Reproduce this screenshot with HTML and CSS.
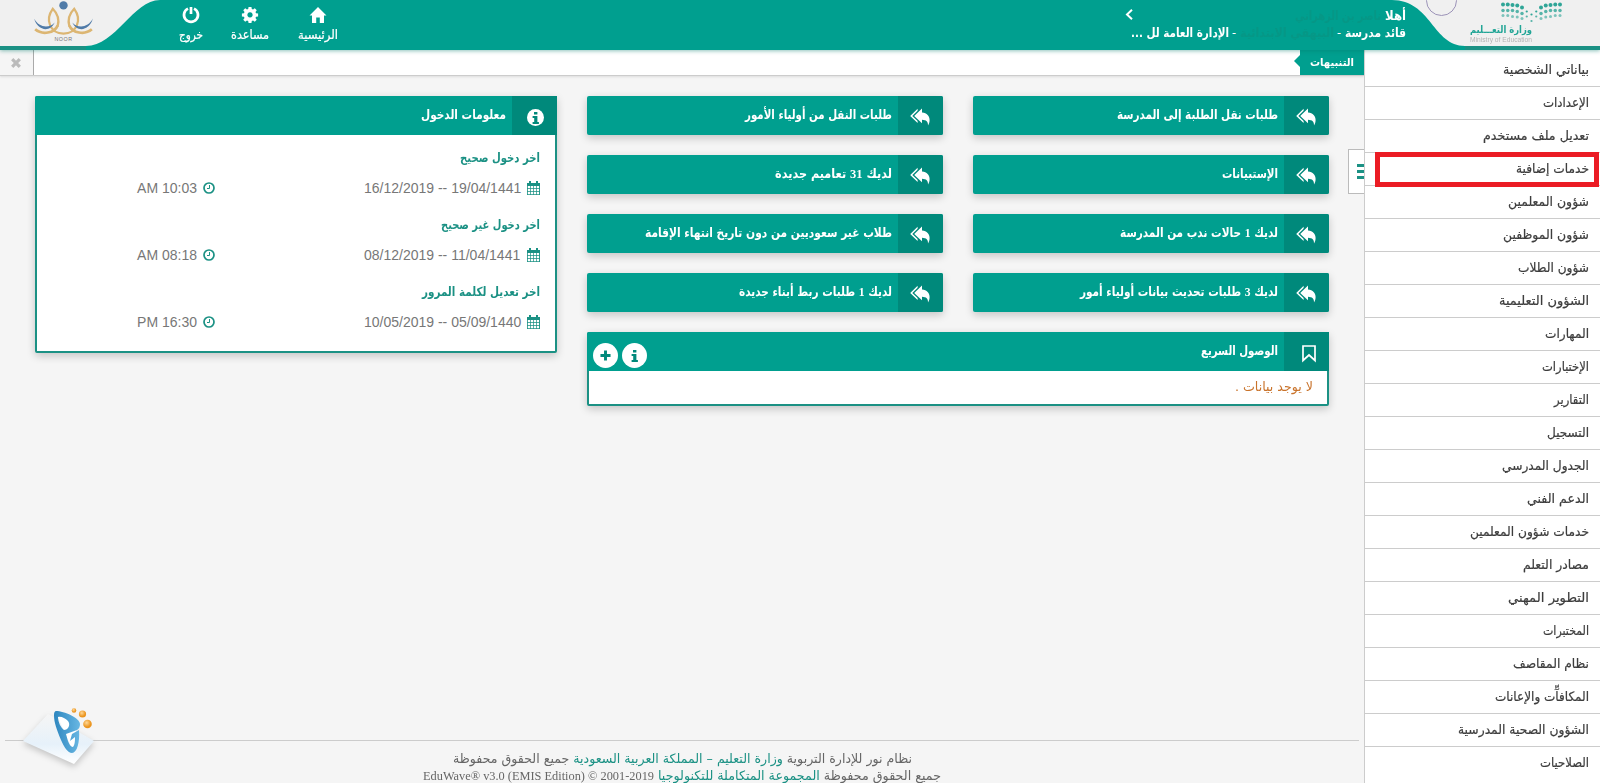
FILE: index.html
```html
<!DOCTYPE html>
<html lang="ar" dir="rtl">
<head>
<meta charset="utf-8">
<title>نظام نور</title>
<link rel="stylesheet" href="styles.css">
</head>
<body>
<svg width="0" height="0" class="defs">
  <symbol id="reply" viewBox="0 0 20 18"><path d="M12 0.500v4c5 .4 7.600 3.500 7.600 7.500 0 2-.6 4-1.600 5.500.2-4-1.600-5.500-6-5.700v3.500L4.200 8z"/><path d="M7.600 .8v2L2.300 8l5.300 5v2L.2 8z"/></symbol>
  <symbol id="cal" viewBox="0 0 13 14"><path fill-rule="evenodd" d="M0 2h2V0h2v2h5V0h2v2h2v12H0zM.8 5v2.200h2.300V5zm3 0v2.200h2.300V5zm3 0v2.200h2.300V5zm3 0v2.200h2.300V5zM.8 8v2.200h2.300V8zm3 0v2.200h2.300V8zm3 0v2.200h2.300V8zm3 0v2.200h2.300V8zM.8 11v2.200h2.300V11zm3 0v2.200h2.300V11zm3 0v2.200h2.300V11zm3 0v2.200h2.300V11z"/></symbol>
  <symbol id="clock" viewBox="0 0 12 12"><circle cx="6" cy="6" r="5" fill="none" stroke="currentColor" stroke-width="1.700"/><path d="M6.500 3v3.500H4" fill="none" stroke="currentColor"/></symbol>
  <symbol id="info" viewBox="0 0 8 12"><path d="M2 0h3.400v2.600H2zM.6 4h4.800v6h1.500v2H.6v-2h1.600V6H.6z"/></symbol>
</svg>
<header class="top">
  <svg class="swoosh" viewBox="0 0 1600 50">
    <path fill="#1b9184" d="M0 46H1600V50H0z"/>
    <path fill="#009f8f" d="M160 0C133 0 116 46 86 46V50H1465V46C1433 46 1431 0 1392 0z"/>
    <circle cx="1441.500" cy="0.500" r="15" fill="none" stroke="#9c93b8"/>
  </svg>
  <div class="ministry">
    <svg class="dots" viewBox="0 0 61 22" id="dots"></svg>
    <div class="min-ar"><span data-w="62">وزارة التعـــليم</span></div>
    <div class="min-en"><span data-w="62">Ministry of Education</span></div>
  </div>
  <div class="user">
    <div class="line"><span data-w="21">أهلا</span> <span class="ghost" data-w="86">ناصر بن الزهراني</span></div>
    <div class="line"><span data-w="61">قائد مدرسة</span> <span class="dash">-</span><span class="ghost" data-w="94">البيهقي الابتدائية</span> <span class="dash">-</span> <span data-w="98">الإدارة العامة لل ...</span></div>
  </div>
  <svg class="chev" viewBox="0 0 8 11"><path d="M7 .8 2 5.500 7 10.200" fill="none" stroke="#fff" stroke-width="2"/></svg>
  <nav class="tools">
    <a><svg viewBox="0 0 18 17"><path d="M9 .5 17.500 9H15v7.500h-4.200V11H7.200v5.500H3V9H.5z"/></svg><span data-w="40">الرئيسية</span></a>
    <a><svg viewBox="0 0 18 20"><path fill-rule="evenodd" d="M7.400 1h3.200l.4 2.300 1.400.6 1.900-1.400 2.200 2.200-1.400 1.900.6 1.400 2.300.4v3.200l-2.300.4-.6 1.400 1.400 1.900-2.200 2.200-1.900-1.400-1.400.6-.4 2.300H7.400L7 16.700l-1.400-.6-1.900 1.400-2.200-2.200 1.400-1.900-.6-1.400L0 11.600V8.400L2.300 8l.6-1.400-1.400-1.900 2.200-2.200 1.900 1.400L7 3.300zM9 7a2.900 2.900 0 1 0 .01 0z"/></svg><span data-w="38">مساعدة</span></a>
    <a><svg viewBox="0 0 18 18"><path d="M6 2.600a7 7 0 1 0 6 0M9 1v7" fill="none" stroke="#fff" stroke-width="2.700"/></svg><span data-w="24">خروج</span></a>
  </nav>
  <svg class="noor" viewBox="0 0 62 44">
    <circle cx="31" cy="5.500" r="4.300" fill="#507ba8"/>
    <g fill="none" stroke="#dcb673"><path stroke-width="2.800" d="M2 30C9 36 22 34 25 26M60 30C53 36 40 34 37 26"/><path d="M25 27C27 20 25 14 20 9 12 20 17 34 31 34.500 45 34 50 20 42 9 37 14 35 20 37 27" stroke-width="2.300"/></g>
    <path d="M1 19C4 31 17 34 22 23 17 29 6 29 1 19zM61 19C58 31 45 34 40 23 45 29 56 29 61 19z" fill="#507ba8"/>
    <text x="31" y="42" text-anchor="middle">NOOR</text>
  </svg>
</header>
<div class="body">
  <aside class="side">
    <div class="toggle"><i></i><i></i><i></i></div>
    <ul>
      <li><span data-w="86">بياناتي الشخصية</span></li>
      <li><span data-w="46">الإعدادات</span></li>
      <li><span data-w="106">تعديل ملف مستخدم</span></li>
      <li class="marked"><span data-w="73">خدمات إضافية</span></li>
      <li><span data-w="81">شؤون المعلمين</span></li>
      <li><span data-w="86">شؤون الموظفين</span></li>
      <li><span data-w="71">شؤون الطلاب</span></li>
      <li><span data-w="90">الشؤون التعليمية</span></li>
      <li><span data-w="44">المهارات</span></li>
      <li><span data-w="47">الإختبارات</span></li>
      <li><span data-w="35">التقارير</span></li>
      <li><span data-w="42">التسجيل</span></li>
      <li><span data-w="87">الجدول المدرسي</span></li>
      <li><span data-w="62">الدعم الفني</span></li>
      <li><span data-w="119">خدمات شؤون المعلمين</span></li>
      <li><span data-w="66">مصادر التعلم</span></li>
      <li><span data-w="81">التطوير المهني</span></li>
      <li><span data-w="46">المختبرات</span></li>
      <li><span data-w="76">نظام المقاصف</span></li>
      <li><span data-w="94">المكافآّت والإعانات</span></li>
      <li><span data-w="131">الشؤون الصحية المدرسية</span></li>
      <li><span data-w="49">الصلاحيات</span></li>
    </ul>
  </aside>
  <div class="main">
    <div class="alerts"><div class="tag"><span data-w="44">التنبيهات</span></div><div class="close"><svg viewBox="0 0 10 10"><path d="M1.200 1.200l7.600 7.600M8.800 1.200l-7.600 7.600" stroke="#bbb" stroke-width="3.200"/></svg></div></div>
    <main class="content">
      <section class="wide">
        <div class="tiles">
          <a class="tile"><b><svg><use href="#reply"/></svg></b><span data-w="161">طلبات نقل الطلبة إلى المدرسة</span></a>
          <a class="tile"><b><svg><use href="#reply"/></svg></b><span data-w="147">طلبات النقل من أولياء الأمور</span></a>
          <a class="tile"><b><svg><use href="#reply"/></svg></b><span data-w="56">الإستبيانات</span></a>
          <a class="tile"><b><svg><use href="#reply"/></svg></b><span data-w="117">لديك <em>31</em> تعاميم جديدة</span></a>
          <a class="tile"><b><svg><use href="#reply"/></svg></b><span data-w="158">لديك <em>1</em> حالات ندب من المدرسة</span></a>
          <a class="tile"><b><svg><use href="#reply"/></svg></b><span data-w="247">طلاب غير سعوديين من دون تاريخ انتهاء الإقامة</span></a>
          <a class="tile"><b><svg><use href="#reply"/></svg></b><span data-w="198">لديك <em>3</em> طلبات تحديث بيانات أولياء أمور</span></a>
          <a class="tile"><b><svg><use href="#reply"/></svg></b><span data-w="153">لديك <em>1</em> طلبات ربط أبناء جديدة</span></a>
        </div>
        <div class="panel quick">
          <div class="head"><b><svg viewBox="0 0 14 17"><path d="M1 1h12v14.500l-6-5.500-6 5.500z" fill="none" stroke="#fff" stroke-width="1.700"/></svg></b><span data-w="77">الوصول السريع</span>
            <div class="rounds"><i><svg class="mini"><use href="#info"/></svg></i><i><svg viewBox="0 0 12 12" class="plus"><path d="M6 .5v11M.5 6h11" stroke="currentColor" stroke-width="3.200"/></svg></i></div></div>
          <p><span data-w="78">لا يوجد بيانات .</span></p>
        </div>
      </section>
      <section class="panel login">
        <div class="head"><b><i class="badge"><svg class="mini"><use href="#info"/></svg></i></b><span data-w="85">معلومات الدخول</span></div>
        <div class="rows">
          <h4><span data-w="80">اخر دخول صحيح</span></h4>
          <div class="row"><svg class="cal"><use href="#cal"/></svg><bdi dir="ltr" class="date">16/12/2019 -- 19/04/1441</bdi><svg class="clk"><use href="#clock"/></svg><bdi dir="ltr">AM 10:03</bdi></div>
          <h4><span data-w="99">اخر دخول غير صحيح</span></h4>
          <div class="row"><svg class="cal"><use href="#cal"/></svg><bdi dir="ltr" class="date">08/12/2019 -- 11/04/1441</bdi><svg class="clk"><use href="#clock"/></svg><bdi dir="ltr">AM 08:18</bdi></div>
          <h4><span data-w="118">اخر تعديل لكلمة المرور</span></h4>
          <div class="row"><svg class="cal"><use href="#cal"/></svg><bdi dir="ltr" class="date">10/05/2019 -- 05/09/1440</bdi><svg class="clk"><use href="#clock"/></svg><bdi dir="ltr">PM 16:30</bdi></div>
        </div>
      </section>
    </main>
    <footer>
      <div><span data-w="459">نظام نور للإدارة التربوية <a>وزارة التعليم – المملكة العربية السعودية</a> جميع الحقوق محفوظة</span></div>
      <div class="copy"><span data-w="283">جميع الحقوق محفوظة <a>المجموعة المتكاملة للتكنولوجيا</a></span> <bdi dir="ltr" data-w="231">EduWave® v3.0 (EMIS Edition) © 2001-2019</bdi></div>
      <svg class="edu" viewBox="0 0 80 66">
        <defs>
          <linearGradient id="paper" x1="0" y1="0" x2="0" y2="1"><stop offset="0" stop-color="#f5f5f5"/><stop offset=".6" stop-color="#e6f1fa"/><stop offset="1" stop-color="#fff"/></linearGradient>
          <linearGradient id="blue"><stop offset="0" stop-color="#2d86bf"/><stop offset="1" stop-color="#68b7e3"/></linearGradient>
          <radialGradient id="ball" cx=".4" cy=".35"><stop offset="0" stop-color="#ffd795"/><stop offset="1" stop-color="#eb951f"/></radialGradient>
        </defs>
        <path class="sheet" d="M3 35 28 8 74 35 54 58z" fill="url(#paper)"/>
        <path fill="#fff" d="M37 9C45 9 57 13 56 24L57 40 52 43z"/>
        <path fill="url(#blue)" fill-rule="evenodd" d="M36 5C44 5 60 12 60 18 60 21 59 23 57 24L46 28C48 36 50 41 53 41 55 39 55 34 55 31L50 35 52 28 59 24C60 36 57 47 52 47 48 47 44 41 41 34 37 24 34 17 34 9 34 6 35 5 36 5zM38 11C38 16 41 22 44 24 48 24 51 19 48 15 45 12 41 10 38 11z"/>
        <circle cx="54" cy="4.500" r="2.300" fill="url(#ball)"/><circle cx="62.500" cy="8" r="3.600" fill="url(#ball)"/><circle cx="67.500" cy="18" r="4.300" fill="url(#ball)"/>
      </svg>
    </footer>
  </div>
</div>
<script src="app.js"></script>
</body>
</html>
```
FILE: styles.css
```css
* { box-sizing: border-box; }
body { margin: 0; height: 783px; overflow: hidden; background: #f5f5f5; color: #444; font: 13px "DejaVu Sans Condensed", "DejaVu Sans", sans-serif; font-stretch: condensed; display: flex; flex-direction: column; }
.defs { position: absolute; }
svg { display: block; fill: currentColor; overflow: visible; }
[data-w] { display: inline-block; white-space: nowrap; text-align: start; }
.top { position: relative; z-index: 3; height: 50px; flex: none; display: flex; background: #f0f0f0; color: #fff; box-shadow: 0 1px 4px rgba(0,120,105,.45); }
.swoosh { position: absolute; left: 0; top: 0; width: 1600px; height: 50px; }
.ministry { position: relative; width: 194px; padding: 2px 38px 0 0; }
.dots { width: 61px; height: 22px; color: #2fa597; }
.min-ar { color: #22a596; font-size: 10px; line-height: 11px; padding-right: 30px; font-weight: bold; }
.min-en { color: #b5b5b5; font: 6.500px "Liberation Sans", sans-serif; line-height: 9px; padding-right: 30px; }
.user { position: relative; padding-top: 7px; font-size: 12.500px; width: 273px; font-weight: bold; }
.line { height: 17px; line-height: 17px; white-space: nowrap; display: flex; gap: 4px; }
.dash { width: 3px; font-weight: normal; }
.ghost { color: #069786; }
.chev { position: relative; width: 8px; height: 11px; margin-top: 9px; }
.tools { position: relative; margin-right: 773px; display: flex; padding-top: 6px; }
.tools a { display: flex; flex-direction: column; align-items: center; gap: 2px; font-size: 12.500px; line-height: 18px; width: 68px; }
.tools a:last-child { width: 50px; }
.tools svg { width: 18px; height: 18px; }
.tools span { -webkit-text-stroke: .2px #fff; }
.noor { position: absolute; left: 33px; top: 0; width: 61px; height: 43px; }
.noor text { font: 5.500px "Liberation Sans", sans-serif; letter-spacing: .5px; fill: #777; direction: ltr; }
.body { flex: 1; display: flex; min-height: 0; }
.side { position: relative; width: 236px; background: #fff; border-left: 1px solid #ccc; padding-top: 4px; }
.side ul { list-style: none; margin: 0; padding: 0; }
.side li { height: 33px; line-height: 32px; border-bottom: 1px solid #ccc; padding-right: 11px; position: relative; color: #3d3d3d; font-size: 13px; -webkit-text-stroke: .2px #3d3d3d; }
.side li:last-child { border-bottom: 0; }
.marked::after { content: ""; box-sizing: border-box; position: absolute; left: 10px; top: -1px; width: 224px; height: 35px; border: 5px solid #eb1c24; z-index: 2; }
.toggle { position: absolute; left: -17px; top: 99px; width: 16px; height: 45px; background: #fff; border: 1px solid #bbb; border-right: 0; padding-top: 14px; display: flex; flex-direction: column; align-items: flex-start; gap: 3px; }
.toggle i { width: 7px; height: 3px; background: #1b9184; }
.main { flex: 1; display: flex; flex-direction: column; position: relative; }
.alerts { height: 26px; background: #fff; border-bottom: 1px solid #ccc; display: flex; justify-content: space-between; box-shadow: 0 1px 2px #ddd; }
.tag { position: relative; width: 64px; height: 25px; background: #009f8f; color: #fff; font: bold 11px/25px "DejaVu Sans Condensed", "DejaVu Sans", sans-serif; padding-right: 10px; }
.tag::after { content: ""; position: absolute; left: -6px; top: 5px; border: 6px solid transparent; border-left: 0; border-right-color: #009f8f; }
.close { width: 34px; border-right: 1px solid #aaa; background: #f5f5f5; display: flex; align-items: center; justify-content: center; padding-right: 2px; }
.close svg { width: 10px; height: 10px; }
.content { display: flex; flex: 1; padding: 20px 35px 0; gap: 30px; align-items: flex-start; }
.wide { width: 742px; }
.tiles { display: grid; grid-template-columns: 356px 356px; gap: 20px 30px; }
.tile, .head { height: 39px; background: #009f8f; color: #fff; display: flex; gap: 6px; font-weight: bold; font-size: 13px; line-height: 38px; }
.tile { border-radius: 2px; box-shadow: 0 3px 8px rgba(0,0,0,.2); }
.tile b { width: 45px; background: #00897b; display: flex; align-items: center; justify-content: center; border-radius: 0 2px 2px 0; }
.tile b svg { width: 20px; height: 18px; margin-top: 2px; margin-right: 1px; }
.tile em { font: bold 13px "Liberation Serif", serif; }
.panel { border: 2px solid #1b9184; border-radius: 2px; background: #fff; box-shadow: 0 3px 8px rgba(0,0,0,.2); }
.head { position: relative; margin: -2px -2px 0; border-radius: 2px 2px 0 0; }
.head b { width: 45px; background: #00897b; display: flex; align-items: center; justify-content: center; }
.quick { margin-top: 20px; height: 74px; }
.quick b svg { width: 14px; height: 17px; margin: 4px 0 0 5px; }
.quick p { margin: 0; padding-right: 14px; color: #c9732b; font-size: 13px; line-height: 32px; }
.rounds { margin: 11px auto 0 6px; display: flex; gap: 4px; }
.rounds i { width: 25px; height: 25px; border-radius: 50%; background: #fff; color: #00897b; display: flex; align-items: center; justify-content: center; }
.mini { width: 8px; height: 12px; }
.plus { width: 11px; height: 11px; }
.badge { width: 17px; height: 17px; border-radius: 50%; background: #fff; color: #00897b; display: flex; align-items: center; justify-content: center; margin: 4px 0 0 2px; }
.quick b svg { margin-left: 5px; margin-right: 0; }
.login { width: 522px; height: 257px; }
.rows { padding: 8px 15px 0; }
.rows h4 { margin: 0; height: 30px; line-height: 30px; font-size: 12.500px; color: #1b9184; }
.row { height: 37px; padding-bottom: 7px; display: flex; align-items: center; font: 14px "Liberation Sans", sans-serif; color: #777; }
.row svg { color: #1b9184; }
.row bdi { margin-right: 6px; white-space: nowrap; }
.row .date { width: 157px; margin-left: 149px; }
.cal { width: 13px; height: 14px; }
.clk { width: 12px; height: 12px; }
footer { position: relative; margin: 0 5px; height: 43px; border-top: 1px solid #ccc; text-align: center; color: #666; font-size: 13px; padding-top: 9px; }
footer div { height: 17px; line-height: 17px; white-space: nowrap; }
footer a { color: #1b9184; }
.copy { display: flex; justify-content: center; gap: 4px; }
.copy bdi { font: 13px/17px "Liberation Serif", serif; }
.edu { position: absolute; left: 15px; top: -35px; width: 80px; height: 66px; }
.sheet { filter: drop-shadow(0 3px 3px rgba(0,0,0,.2)); }
```
FILE: app.js
```js
// Keep every label at its design width whatever font it falls back to.
document.querySelectorAll('[data-w]').forEach(function (el) {
  var target = +el.dataset.w;
  var natural = el.getBoundingClientRect().width;
  el.style.width = target + 'px';
  el.style.transformOrigin = getComputedStyle(el).direction === 'rtl' ? '100% 50%' : '0 50%';
  el.style.transform = 'scaleX(' + target / natural + ')';
  // The box takes the target width; the text inside keeps its own.
  el.innerHTML = '<span style="display:inline-block;width:' + natural + 'px;white-space:nowrap">' + el.innerHTML + '</span>';
});

// Dot pattern of the ministry emblem: an open book, dipping to the middle.
var dots = document.getElementById('dots');
var columns = [[2, 8, 13], [2, 8, 13], [2.5, 8, 14], [3, 9, 14.5], [5, 11, 16], [9, 14], [12, 18.5]];
var html = '';
for (var c = 0; c < 13; c++) {
  columns[c < 7 ? c : 12 - c].forEach(function (y, r) {
    html += '<circle cx="' + (2 + c * 4.75) + '" cy="' + (y + 0.5) + '" r="' + (c > 4 && c < 8 ? 1.1 : 2 - r * 0.25) + '" opacity="' + (1 - r * 0.2) + '"/>';
  });
}
dots.innerHTML = html;
```
